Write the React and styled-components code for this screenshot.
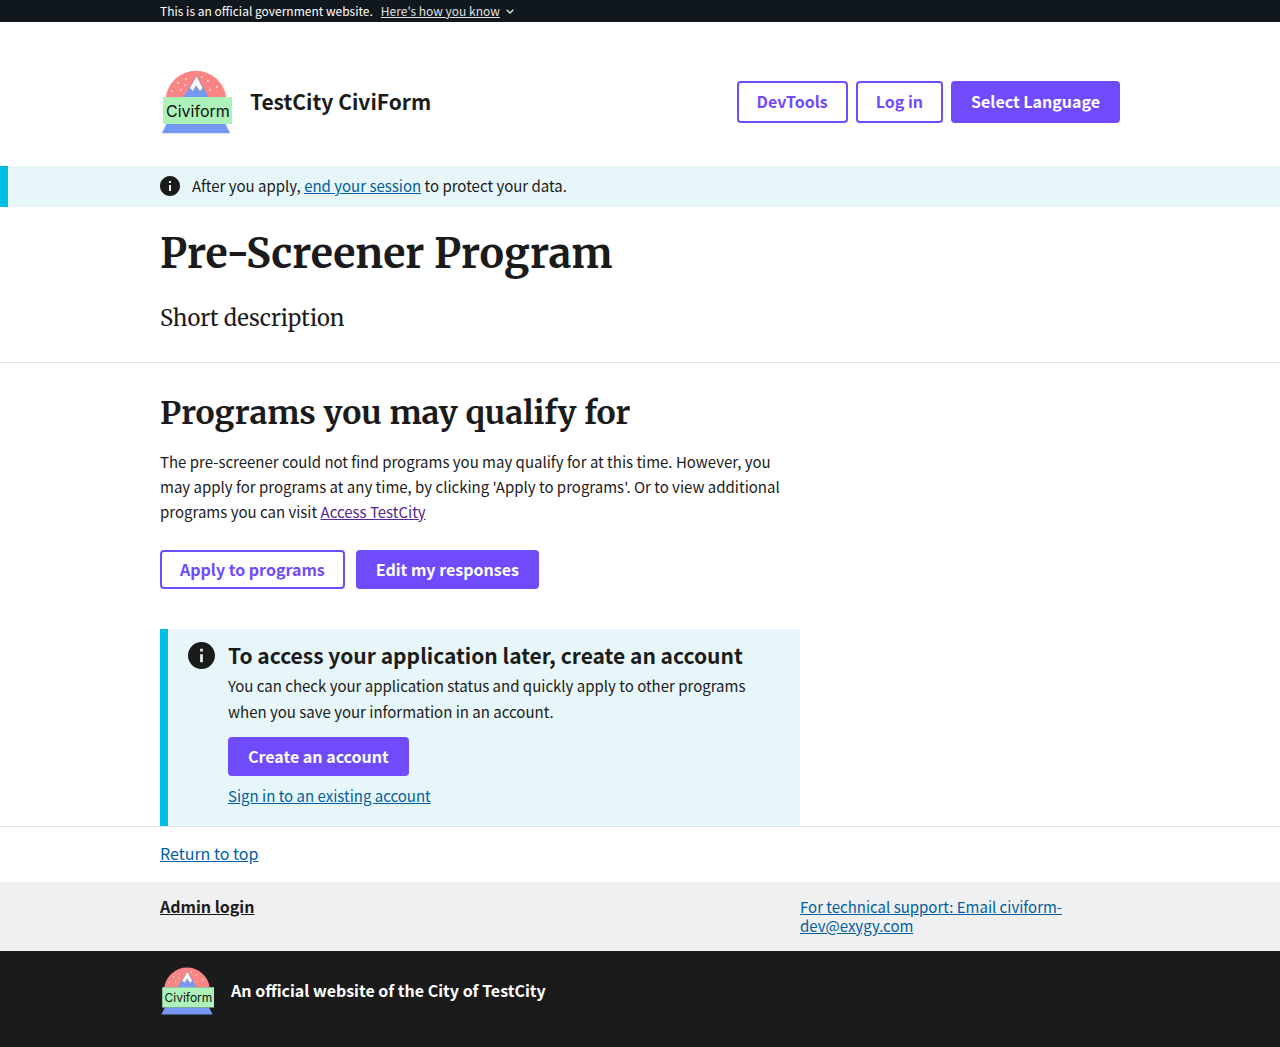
import React from "react";
import styled, { createGlobalStyle, css } from "styled-components";

const sans = `"Noto Sans CJK SC", "Noto Sans", sans-serif`;
const serif = `Merriweather, "DejaVu Serif Condensed", "DejaVu Serif", serif`;

const color = {
  ink: "#1b1b1b",
  link: "#005ea2",
  visited: "#54278f",
  primary: "#6f4bfb",
  infoBg: "#e7f6f8",
  infoBar: "#00bde3",
  line: "#dfe1e2",
  footer: "#f0f0f0",
  banner: "#11181d",
};

const GlobalStyle = createGlobalStyle`
  *, *::before, *::after { box-sizing: border-box; }
  body {
    margin: 0;
    background: #fff;
    color: ${color.ink};
    font-family: ${sans};
    font-size: 15px;
    line-height: 19px;
  }
  h1, h2, h3, p { margin: 0; }
`;

const Container = styled.div`
  width: 100%;
  max-width: 1024px;
  margin: 0 auto;
  padding: 0 32px;
`;

const Link = styled.a`
  color: ${(p) => (p.$visited ? color.visited : color.link)};
  text-decoration: underline;
`;

const Button = styled.button`
  height: ${(p) => (p.$tall ? 42 : 39)}px;
  padding: 0 ${(p) => (p.$outline ? 18 : 20)}px 2px;
  border: 0;
  border-radius: 4px;
  background: ${color.primary};
  color: #fff;
  font-family: inherit;
  font-size: 16px;
  font-weight: 700;
  line-height: 16px;
  white-space: nowrap;
  cursor: pointer;
  ${(p) =>
    p.$outline &&
    css`
      border: 2px solid ${color.primary};
      background: transparent;
      color: ${color.primary};
    `}
`;

const Banner = styled.section`
  background: ${color.banner};
  color: #fff;
  font-size: 12px;
  line-height: 22px;
`;

const BannerRow = styled(Container)`
  display: flex;
  align-items: center;
  gap: 8px;
`;

const BannerButton = styled.button`
  display: flex;
  align-items: center;
  gap: 6px;
  padding: 0;
  border: 0;
  background: none;
  color: #dfe1e2;
  font: inherit;
  cursor: pointer;
  span { text-decoration: underline; }
`;

const HeaderRow = styled(Container)`
  display: flex;
  align-items: center;
  justify-content: space-between;
  padding-top: 48px;
  padding-bottom: 32px;
`;

const Brand = styled.div`
  display: flex;
  align-items: center;
  gap: 18px;
  font-size: 21px;
  font-weight: 700;
  line-height: 28px;
  svg { display: block; }
`;

const BrandText = styled.span`
  padding-bottom: 2px;
`;

const HeaderActions = styled.nav`
  display: flex;
  gap: 8px;
`;

const SessionAlert = styled.section`
  border-left: 8px solid ${color.infoBar};
  padding-right: 8px;
  background: ${color.infoBg};
`;

const AlertRow = styled(Container)`
  display: flex;
  align-items: center;
  gap: 12px;
  padding-top: 7px;
  padding-bottom: 9px;
  line-height: 25px;
`;

const Intro = styled.section`
  padding: 21px 0 29px;
  border-bottom: 1px solid ${color.line};
`;

const Title = styled.h1`
  font-family: ${serif};
  font-size: 41px;
  font-weight: 700;
  line-height: 52px;
`;

const Lead = styled.p`
  margin-top: 23px;
  font-family: ${serif};
  font-size: 22px;
  line-height: 30px;
`;

const Results = styled.section`
  padding-top: 28px;
  border-bottom: 1px solid ${color.line};
`;

const Column = styled.div`
  max-width: 640px;
`;

const SectionTitle = styled.h2`
  font-family: ${serif};
  font-size: 32px;
  font-weight: 700;
  line-height: 44px;
`;

const ResultText = styled.p`
  margin-top: 14px;
  line-height: 25px;
`;

const Actions = styled.div`
  display: flex;
  gap: 11px;
  margin-top: 26px;
`;

const AccountBox = styled.section`
  display: flex;
  align-items: flex-start;
  gap: 13px;
  margin-top: 40px;
  padding: 13px 20px 18px;
  border-left: 8px solid ${color.infoBar};
  background: ${color.infoBg};
  svg { flex: none; }
`;

const AccountBody = styled.div`
  display: flex;
  flex-direction: column;
  align-items: flex-start;
`;

const AccountTitle = styled.h3`
  margin-bottom: 4px;
  font-size: 21px;
  line-height: 27px;
`;

const AccountText = styled.p`
  line-height: 26px;
`;

const AccountButton = styled(Button)`
  margin: 12px 0 8px;
`;

const AccountLink = styled(Link)`
  line-height: 24px;
`;

const TopLink = styled(Container)`
  padding-top: 17px;
  padding-bottom: 19px;
  font-size: 16px;
`;

const FooterNav = styled.section`
  padding: 15px 0 16px;
  background: ${color.footer};
`;

const FooterGrid = styled(Container)`
  display: grid;
  grid-template-columns: 2fr 1fr;
`;

const AdminLink = styled.a`
  color: ${color.ink};
  font-size: 16px;
  font-weight: 700;
`;

const FooterIdentity = styled.section`
  background: ${color.ink};
  color: #fff;
  font-size: 16px;
  font-weight: 700;
`;

const IdentityRow = styled(Container)`
  display: flex;
  align-items: center;
  gap: 17px;
  padding-top: 16px;
  padding-bottom: 32px;
`;

const snow = [
  [11, 22], [17, 14], [20, 21], [25, 10], [24, 16], [47, 12],
  [49, 21], [56, 18], [41, 8],
];

function Logo({ width, height }) {
  return (
    <svg width={width} height={height} viewBox="0 0 72 64" role="img" aria-label="Civiform">
      <path d="M5.8 27A30.5 30.5 0 0 1 66.200 27Z" fill="#fa8585" />
      {snow.map(([x, y]) => (
        <circle key={`${x}-${y}`} cx={x + 1} cy={y - 1} r=".9" fill="#fde3e3" />
      ))}
      <path d="M23.500 27 36.500 5.500 48.500 27Z" fill="#7599f3" />
      <path
        d="M29.500 18 36.500 5.500 43 18 40 21.500 36 16 33 21.500Z"
        fill="#f7f7f7"
        stroke="#777"
        strokeWidth=".5"
      />
      <path d="M6.500 54H65.500L70.200 63.300H1.800Z" fill="#7599f3" />
      <rect x="3" y="27" width="69" height="27" fill="#adf3b9" />
      <text
        x="6"
        y="47.300"
        fontFamily="Inter, Roboto, sans-serif"
        fontSize="16"
        fontWeight="400"
        fill="#111"
      >
        Civiform
      </text>
    </svg>
  );
}

function InfoIcon({ size }) {
  return (
    <svg width={size} height={size} viewBox="2 2 20 20" aria-hidden="true">
      <path
        fill={color.ink}
        d="M12 2C6.480 2 2 6.480 2 12s4.480 10 10 10 10-4.480 10-10S17.520 2 12 2zm1 15h-2v-6h2v6zm0-8h-2V7h2v2z"
      />
    </svg>
  );
}

export default function App() {
  return (
    <>
      <GlobalStyle />
      <Banner>
        <BannerRow>
          <span>This is an official government website.</span>
          <BannerButton type="button" aria-expanded="false">
            <span>Here's how you know</span>
            <svg width="8" height="5" viewBox="0 0 8 5" fill="none" aria-hidden="true">
              <path d="M.7.7 4 4 7.300.7" stroke="#dfe1e2" strokeWidth="1.400" />
            </svg>
          </BannerButton>
        </BannerRow>
      </Banner>

      <header id="top">
        <HeaderRow>
          <Brand>
            <Logo width={72} height={64} />
            <BrandText>TestCity CiviForm</BrandText>
          </Brand>
          <HeaderActions>
            <Button type="button" $tall $outline>DevTools</Button>
            <Button type="button" $tall $outline>Log in</Button>
            <Button type="button" $tall>Select Language</Button>
          </HeaderActions>
        </HeaderRow>
      </header>

      <SessionAlert>
        <AlertRow>
          <InfoIcon size={20} />
          <p>
            After you apply, <Link href="#end">end your session</Link> to protect your data.
          </p>
        </AlertRow>
      </SessionAlert>

      <main>
        <Intro>
          <Container>
            <Title>Pre-Screener Program</Title>
            <Lead>Short description</Lead>
          </Container>
        </Intro>
        <Results>
          <Container>
            <Column>
              <SectionTitle>Programs you may qualify for</SectionTitle>
              <ResultText>
                The pre-screener could not find programs you may qualify for at this time.
                However, you may apply for programs at any time, by clicking 'Apply to
                programs'. Or to view additional programs you can visit{" "}
                <Link href="#access" $visited>Access TestCity</Link>
              </ResultText>
              <Actions>
                <Button type="button" $outline>Apply to programs</Button>
                <Button type="button">Edit my responses</Button>
              </Actions>
              <AccountBox>
                <InfoIcon size={27} />
                <AccountBody>
                  <AccountTitle>To access your application later, create an account</AccountTitle>
                  <AccountText>
                    You can check your application status and quickly apply to other programs
                    when you save your information in an account.
                  </AccountText>
                  <AccountButton type="button">Create an account</AccountButton>
                  <AccountLink href="#signin">Sign in to an existing account</AccountLink>
                </AccountBody>
              </AccountBox>
            </Column>
          </Container>
        </Results>
      </main>

      <footer>
        <TopLink>
          <Link href="#top">Return to top</Link>
        </TopLink>
        <FooterNav>
          <FooterGrid>
            <div>
              <AdminLink href="#admin">Admin login</AdminLink>
            </div>
            <div>
              <Link href="mailto:civiform-dev@exygy.com">
                For technical support: Email civiform-dev@exygy.com
              </Link>
            </div>
          </FooterGrid>
        </FooterNav>
        <FooterIdentity>
          <IdentityRow>
            <Logo width={54} height={48} />
            <BrandText>An official website of the City of TestCity</BrandText>
          </IdentityRow>
        </FooterIdentity>
      </footer>
    </>
  );
}
